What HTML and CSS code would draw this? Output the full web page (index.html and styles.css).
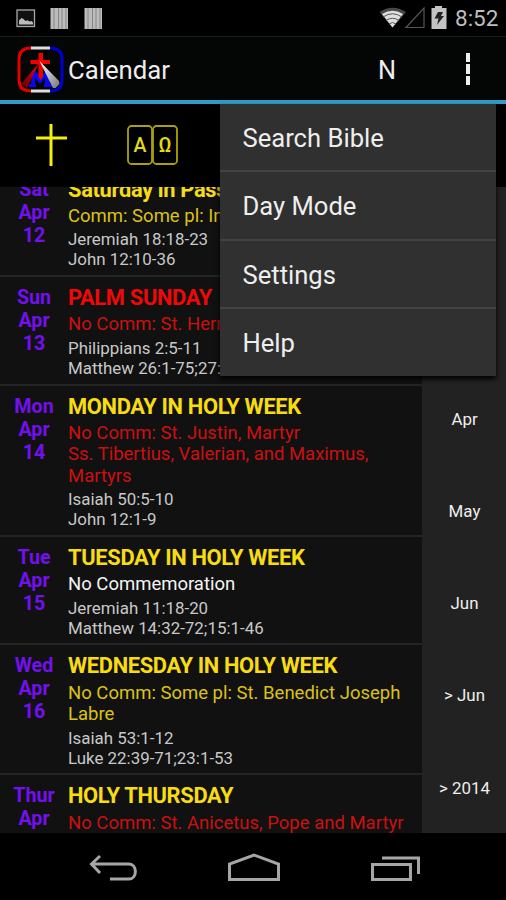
FILE: index.html
```html
<!DOCTYPE html>
<html lang="en">
<head>
<meta charset="utf-8">
<title>Calendar</title>
<link rel="stylesheet" href="styles.css">
</head>
<body>
<div class="screen">
  <header class="status">
    <svg class="status-left" width="110" height="36" viewBox="0 0 110 36">
      <rect x="17" y="10" width="17.500" height="16.500" fill="#111" stroke="#a8a8a8" stroke-width="1.300"/>
      <path d="M19 24.500v-4l2.500-2.500 2 1 2 2 2-.8 2 1.300 2-.5 1.500 1.500v2z" fill="#bbb"/>
      <path d="M50.500 8h17.500v21H50.500zM84.500 8H102v21H84.500z" fill="#bcbcbc"/>
      <path d="M54 8v21M58.500 8v21M62 8v21M66 8v21M88 8v21M92.500 8v21M96 8v21M100 8v21" stroke="#858585" stroke-width="1"/>
    </svg>
    <svg class="status-right" width="72" height="36" viewBox="0 0 72 36">
      <path d="M0.500 12Q13.500 3.500 27 12L13.500 27.500z" fill="#484848"/>
      <path d="M3 14Q13.500 7.500 24 14L13.500 27.500z" fill="#dedede"/>
      <path d="M4 17Q13.500 10.500 23 17M7 20.500Q13.500 16 20 20.500M10 24q3.500-3 7 0" fill="none" stroke="#555" stroke-width="1"/>
      <path d="M27 27.500 45 8v19.500z" fill="#030303" stroke="#555" stroke-width="1.200"/>
      <path d="M52.500 8h3.500V6h7v2h4.500v21h-15z" fill="#c4c4c4"/>
      <path d="M59 12h5l-2 4h3l-7 9 1.500-6.500h-4z" fill="#222"/>
    </svg>
    <span class="clock">8:52</span>
  </header>
  <div class="actionbar">
    <svg class="logo" width="47" height="47" viewBox="0 0 47 47">
      <defs>
        <linearGradient id="redray" x1="1" y1="0" x2="0" y2="1"><stop offset="0" stop-color="#f00"/><stop offset="1" stop-color="#500"/></linearGradient>
        <linearGradient id="whiteray" x1="0" y1="0" x2="1" y2="1"><stop offset="0" stop-color="#fff"/><stop offset="1" stop-color="#777"/></linearGradient>
      </defs>
      <path d="M14 2Q2 2 2 13v21q0 11 12 11" fill="none" stroke="#e00000" stroke-width="3"/>
      <path d="M33 2q12 0 12 11v21q0 11-12 11" fill="none" stroke="#0000d0" stroke-width="3"/>
      <path d="M14 2h19M14 45h19" stroke="#ddd" stroke-width="3"/>
      <path d="M12 41v-3h2l1-14h3l5.500 8 5.500-8h3l1 14h2v3h-8v-3h1v-6l-5 6-5-6v6h1v3z" fill="#0808f0"/>
      <path d="M22 17 4 38l6 4z" fill="url(#redray)"/>
      <path d="M21.500 7h4.500v7h7v4h-7v13l-2.500 3-2-3V18h-8v-4h8z" fill="#f20000"/>
      <path d="M22.500 15 36 42h2.500l4-4-.5-3z" fill="url(#whiteray)"/>
    </svg>
    <h1 class="app-title">Calendar</h1>
    <span class="mode">N</span>
    <span class="overflow"><i></i><i></i><i></i></span>
  </div>
  <nav class="tabs">
    <svg width="200" height="83" viewBox="0 0 200 83">
      <path d="M51 20v42M36 34h31" stroke="#f4ee0a" stroke-width="3" fill="none"/>
      <g fill="none" stroke="#aaa10a" stroke-width="1.800"><rect x="128" y="22" width="24" height="38" rx="3.500"/><rect x="153" y="22" width="24" height="38" rx="3.500"/></g>
      <g class="book-letters"><text x="140" y="48">Α</text><text x="165" y="48">Ω</text></g>
    </svg>
  </nav>
  <main class="content">
    <div class="list">
      <article class="day">
        <div class="date">Sat<br>Apr<br>12</div>
        <div class="info"><h2 class="yellow">Saturday in Pass</h2><p class="comm yellow-soft">Comm: Some pl: In</p><p class="refs">Jeremiah 18:18-23<br>John 12:10-36</p></div>
      </article>
      <article class="day">
        <div class="date">Sun<br>Apr<br>13</div>
        <div class="info"><h2 class="red">PALM SUNDAY</h2><p class="comm red-soft">No Comm: St. Herm</p><p class="refs">Philippians 2:5-11<br>Matthew 26:1-75;27:</p></div>
      </article>
      <article class="day">
        <div class="date">Mon<br>Apr<br>14</div>
        <div class="info"><h2 class="yellow">MONDAY IN HOLY WEEK</h2><p class="comm red-soft">No Comm: St. Justin, Martyr<br>Ss. Tibertius, Valerian, and Maximus,<br>Martyrs</p><p class="refs">Isaiah 50:5-10<br>John 12:1-9</p></div>
      </article>
      <article class="day">
        <div class="date">Tue<br>Apr<br>15</div>
        <div class="info"><h2 class="yellow">TUESDAY IN HOLY WEEK</h2><p class="comm white">No Commemoration</p><p class="refs">Jeremiah 11:18-20<br>Matthew 14:32-72;15:1-46</p></div>
      </article>
      <article class="day">
        <div class="date">Wed<br>Apr<br>16</div>
        <div class="info"><h2 class="yellow">WEDNESDAY IN HOLY WEEK</h2><p class="comm yellow-soft">No Comm: Some pl: St. Benedict Joseph<br>Labre</p><p class="refs">Isaiah 53:1-12<br>Luke 22:39-71;23:1-53</p></div>
      </article>
      <article class="day">
        <div class="date">Thur<br>Apr</div>
        <div class="info"><h2 class="yellow">HOLY THURSDAY</h2><p class="comm red-soft">No Comm: St. Anicetus, Pope and Martyr</p></div>
      </article>
    </div>
    <aside class="months"><span>Apr</span><span>May</span><span>Jun</span><span>&gt; Jun</span><span>&gt; 2014</span></aside>
  </main>
  <footer class="navbar">
    <svg width="506" height="67" viewBox="0 0 506 67" fill="none" stroke="#a6a6a6" stroke-width="3">
      <path d="M110 46h19c8.500 0 8.500-15 0-15H92M100 23l-8.500 8 8.500 9"/>
      <path d="M229.500 46.500V31l24.500-9 24.500 9v15.500z"/>
      <path d="M372.500 31.500h38v15h-38zM382 25h36.500v16"/>
    </svg>
  </footer>
  <div class="menu"><div>Search Bible</div><div>Day Mode</div><div>Settings</div><div>Help</div></div>
</div>
</body>
</html>
```
FILE: styles.css
```css
* { box-sizing: border-box; }
body { margin: 0; background: #000; font-family: Roboto, "Liberation Sans", sans-serif; }
h1, h2, p { margin: 0; font-weight: 400; }
.screen { position: relative; width: 506px; height: 900px; overflow: hidden; display: flex; flex-direction: column; background: #000; }
.status { height: 37px; flex: none; display: flex; border-bottom: 1px solid #1c1c1c; }
.status-right { margin-left: 269px; }
.clock { margin-left: 4px; font-size: 22.500px; line-height: 37px; color: #bebebe; }
.actionbar { height: 67px; flex: none; display: flex; align-items: center; background: #040505; border-bottom: 4px solid #329bc5; color: #eee; font-size: 25.300px; }
.logo { margin: 1px 4px 0 17px; }
.app-title { font-size: 25.700px; width: 310px; line-height: 64px; padding-top: 3px; }
.mode { line-height: 63px; padding-top: 3px; width: 87.500px; }
.overflow { display: flex; flex-direction: column; gap: 2px; padding-top: 1px; }
.overflow i { width: 4px; height: 9.500px; background: #eee; }
.tabs { height: 83px; flex: none; }
.tabs svg { display: block; }
.book-letters { fill: #e2db0d; font-size: 19.500px; font-weight: 500; text-anchor: middle; }
.content { height: 646px; flex: none; display: flex; overflow: hidden; }
.list { width: 422px; background: #111; margin-top: -18.400px; }
.day { display: flex; padding: 9px 0 5.200px; border-bottom: 2px solid #242424; }
.date { width: 68px; flex: none; text-align: center; color: #7310ed; font-weight: 700; font-size: 19.700px; line-height: 23px; }
.info { white-space: nowrap; }
h2 { font-size: 21.900px; letter-spacing: -0.350px; line-height: 24px; height: 28.200px; font-weight: 700; }
.comm { font-size: 18.500px; line-height: 21.500px; margin-bottom: 3.200px; }
.refs { font-size: 16.900px; line-height: 19.700px; color: #c8c8c8; }
.yellow { color: #f8dc12; }
.yellow-soft { color: #dcc215; }
.red { color: #f00808; }
.red-soft { color: #cc1010; }
.white { color: #f4f4f4; }
.months { width: 84px; background: #222; color: #eee; font-size: 16.900px; display: flex; flex-direction: column; justify-content: flex-end; text-align: center; line-height: 92.300px; padding-left: 1px; }
.months span { position: relative; top: 1px; }
.navbar { height: 67px; flex: none; }
.menu { position: absolute; left: 220px; top: 104px; width: 276px; height: 272px; background: #303030; color: #eee; font-size: 25.600px; box-shadow: 0 3px 5px #000; }
.menu div { height: 68.300px; line-height: 66px; padding: 1px 0 0 22.500px; border-bottom: 2px solid #434343; }
.menu div:last-child { border: 0; }
```
